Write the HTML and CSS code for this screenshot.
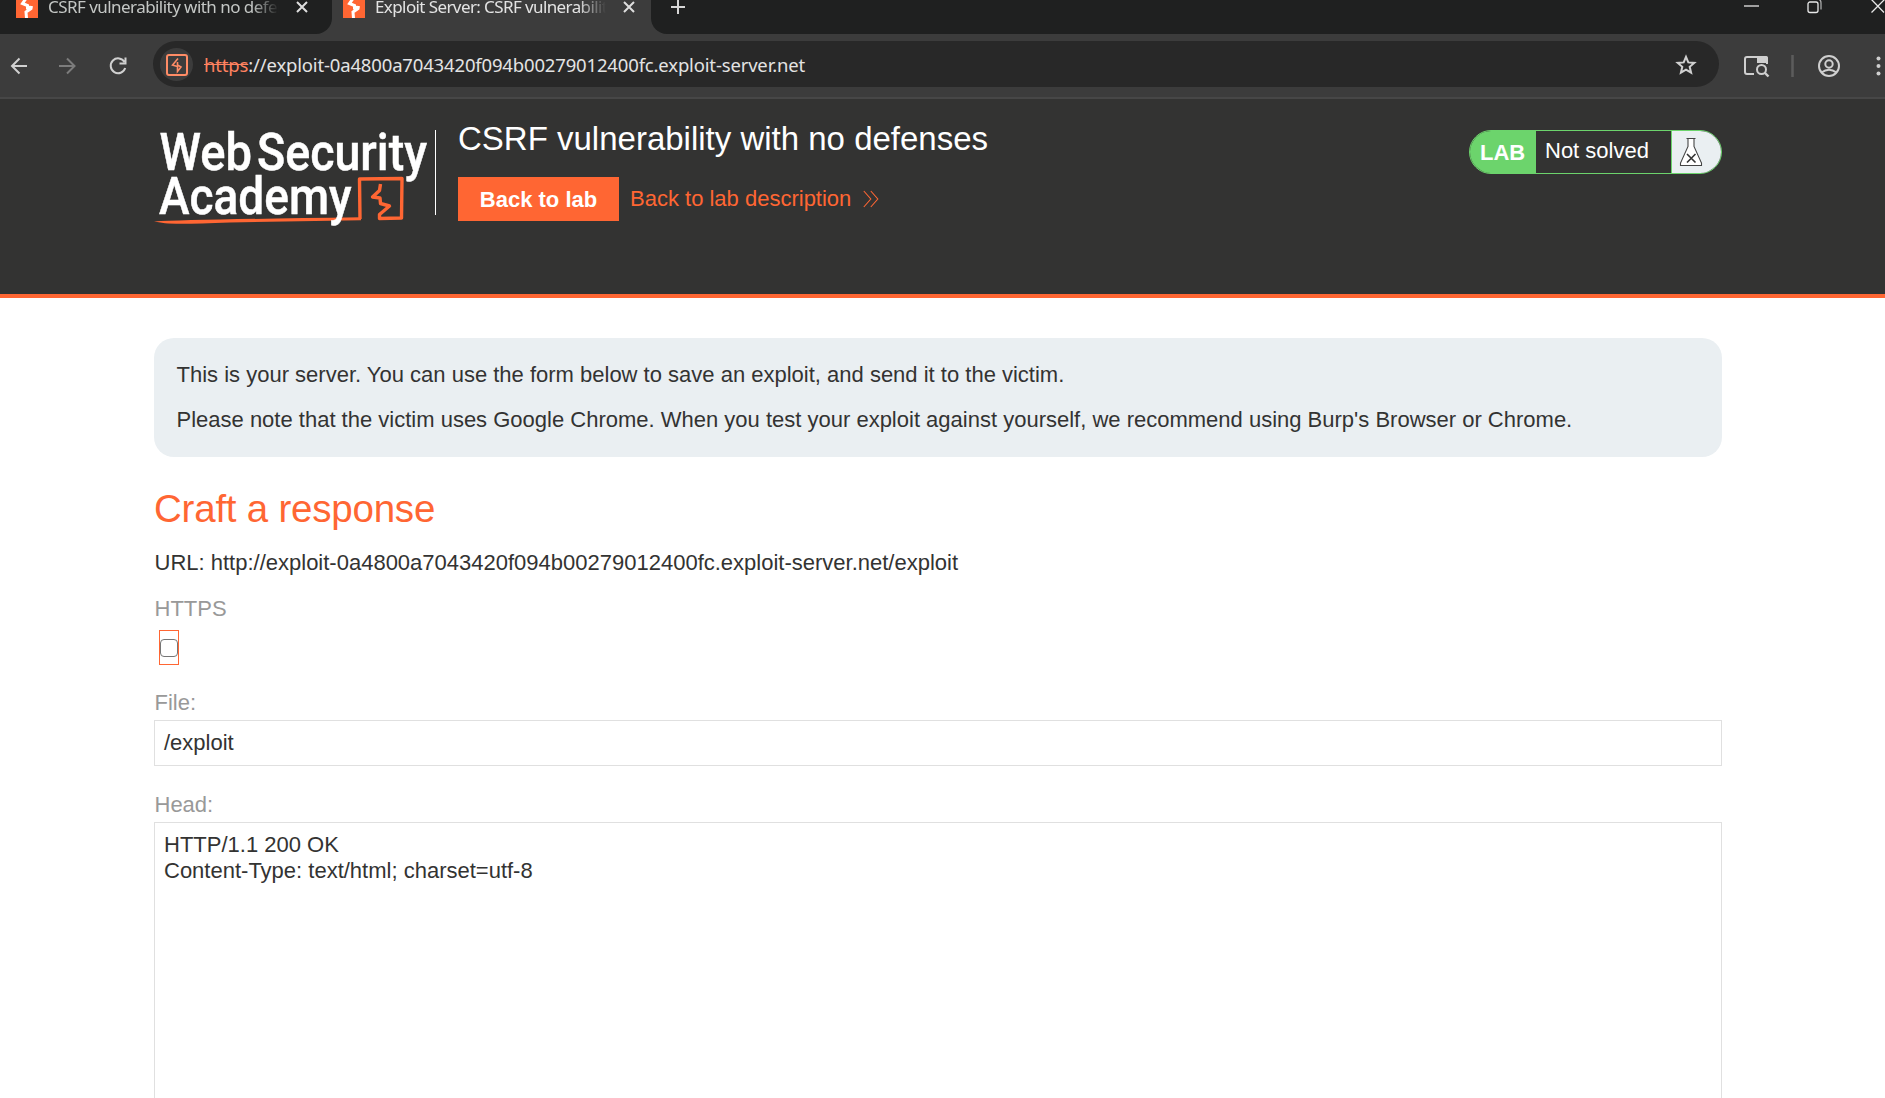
FILE: index.html
```html
<!DOCTYPE html>
<html lang="en">
<head>
<meta charset="utf-8">
<title>Exploit Server: CSRF vulnerability with no defenses</title>
<link rel="stylesheet" href="styles.css">
</head>
<body>
<svg width="0" height="0" class="defs">
  <symbol id="fav" viewBox="0 0 22 22"><path fill="#ff6633" d="M0 0h22v22H0z"/><path fill="none" stroke="#fff" stroke-width="3" d="M11 1L6.500 7.500L11.500 9.500V13M15.500 10L15 12.500L10 16L10.500 22"/><path fill="#fff" d="M10.500 9l5.500 1.500-1 3-4.500 1.500z"/></symbol>
  <symbol id="x" viewBox="0 0 12 12"><path d="M1 1l10 10M11 1L1 11" fill="none" stroke="currentColor" stroke-width="2"/></symbol>
</svg>
<div class="tabs">
  <div class="tab idle">
    <svg class="fav" width="22" height="22"><use href="#fav"/></svg>
    <span class="label">CSRF vulnerability with no defenses</span>
    <svg class="close" width="12" height="12"><use href="#x"/></svg>
  </div>
  <div class="tab active">
    <svg class="fav" width="22" height="22"><use href="#fav"/></svg>
    <span class="label">Exploit Server: CSRF vulnerability with no defenses</span>
    <svg class="close" width="12" height="12"><use href="#x"/></svg>
  </div>
  <div class="rest">
    <svg class="plus" width="14" height="14" viewBox="0 0 14 14"><path d="M7 0v14M0 7h14" stroke="#d6d6d6" stroke-width="2"/></svg>
    <svg class="win" width="141" height="16" viewBox="0 0 141 16" fill="none" stroke="#e8e8e8" stroke-width="1.3">
      <path d="M0 6h15" stroke="#a0a0a0" stroke-width="2"/>
      <rect x="64" y="2" width="10" height="10.500" rx="2"/><path d="M67-1h6q4 0 4 4v6.500" stroke="#aaa"/>
      <path d="M127-1l13 13.500M141-1l-13.500 13.500"/>
    </svg>
  </div>
</div>
<div class="toolbar">
  <svg class="nav" width="126" height="24" viewBox="0 0 126 24" fill="none" stroke-width="2">
    <path d="M17 12H2M9.500 4.500L2 12l7.500 7.500" stroke="#d0d0d0"/>
    <path d="M49 12h15M57 4.500l7.500 7.500-7.500 7.500" stroke="#7c7c7c"/>
    <path d="M114.500 8A7.400 7.400 0 1 0 115.200 14M115.500 3.500V9.500H109.500" stroke="#d0d0d0"/>
  </svg>
  <div class="omni">
    <span class="site"><svg width="22" height="22" viewBox="0 0 22 22" fill="none" stroke="#ff8c66"><rect x="1" y="1" width="20" height="20" rx="2" stroke-width="2"/><path d="M12 4.500L6.500 11L11.500 12.500V17.500L15 13L11.500 11V8" stroke-width="1.600"/></svg></span>
    <span class="url"><s>https</s>://exploit-0a4800a7043420f094b00279012400fc.exploit-server.net</span>
    <svg class="star" width="22" height="22" viewBox="0 0 22 22"><path d="M11 2.800l2.300 5.600 6 .5-4.600 3.900 1.400 5.900L11 15.600l-5.100 3.100 1.400-5.900-4.600-3.900 6-.5z" fill="none" stroke="#d0d0d0" stroke-width="2"/></svg>
  </div>
  <svg class="tools" width="142" height="24" viewBox="0 0 142 24" fill="none" stroke="#cfcfcf" stroke-width="2">
    <path d="M11 20H4q-2 0-2-2V5q0-2 2-2h18q2 0 2 2v5"/><path d="M14 2h9q2 0 2 2v5H14z" fill="#cfcfcf" stroke="none"/>
    <circle cx="18.500" cy="15.500" r="4.500" fill="#3c3c3c"/><path d="M21.500 18.500l4 4" stroke-width="2.400"/>
    <path d="M49.500 1v22" stroke="#5c5c5c" stroke-width="2.500"/>
    <circle cx="86" cy="12" r="10"/><circle cx="86" cy="10" r="3.700"/><path d="M78.500 18.500q7.500-5.500 15 0"/>
    <g fill="#cfcfcf" stroke="none"><circle cx="135.500" cy="4.500" r="2"/><circle cx="135.500" cy="12" r="2"/><circle cx="135.500" cy="19.500" r="2"/></g>
  </svg>
</div>
<header class="head">
  <svg class="logo" width="284" height="100" viewBox="154 126 284 100">
    <path d="M360 219L359.500 179L402 178.500L401.500 218L379.500 218.500L379.500 214.500L389.500 206L380.500 203.500L380 198L372.500 197L379.500 190.500L380.500 184" fill="none" stroke="#ff6633" stroke-linejoin="round" stroke-width="3.400"/>
    <path d="M154 221.500Q190 219.500 361 217.300V220.300L230 222.500Q180 224.500 165 223.300Z" fill="#ff6633"/>
    <g class="logotext">
      <text x="159.500" y="169.500" textLength="92.500" lengthAdjust="spacingAndGlyphs">Web</text>
      <text x="257" y="169.500" textLength="170" lengthAdjust="spacingAndGlyphs">Security</text>
      <text x="159" y="213.500" textLength="192.500" lengthAdjust="spacingAndGlyphs">Academy</text>
    </g>
    <path d="M435.500 130v85" stroke="#fff"/>
  </svg>
  <div class="title">
    <h2>CSRF vulnerability with no defenses</h2>
    <div class="links">
      <a class="btn">Back to lab</a>
      <a class="desc">Back to lab description</a>
      <svg width="16" height="18" viewBox="0 0 16 18" fill="none" stroke="#ff6633" stroke-width="1.100"><path d="M.8 1l7 8-7 8M7.800 1l7 8-7 8"/></svg>
    </div>
  </div>
  <div class="badge">
    <span class="lab">LAB</span><span class="state">Not solved</span>
    <span class="flask"><svg width="24" height="30" viewBox="0 0 24 30"><path d="M7.500 1.500h9M9 1.500v8L1.500 26v2.500h21V26L15 9.500v-8" fill="#fff" stroke="#444" stroke-width="1.100"/><path d="M8 17l8.500 8.500M16.500 17L8 25.500" stroke="#333" stroke-width="1.600"/></svg></span>
  </div>
</header>
<main>
  <section class="info">
    <p>This is your server. You can use the form below to save an exploit, and send it to the victim.</p>
    <p>Please note that the victim uses Google Chrome. When you test your exploit against yourself, we recommend using Burp's Browser or Chrome.</p>
  </section>
  <h1>Craft a response</h1>
  <p class="line">URL: http://exploit-0a4800a7043420f094b00279012400fc.exploit-server.net/exploit</p>
  <label class="line https">HTTPS</label>
  <div class="check"><span></span></div>
  <label class="line">File:</label>
  <div class="input">/exploit</div>
  <label class="line">Head:</label>
  <div class="area">HTTP/1.1 200 OK
Content-Type: text/html; charset=utf-8</div>
</main>
</body>
</html>
```
FILE: styles.css
```css
* { box-sizing: border-box; }
body { margin: 0; height: 1098px; overflow: hidden; background: #fff; color: #333332; font: 22px/26px "Liberation Sans", Arial, sans-serif; }
p, h1, h2 { margin: 0; font-weight: 400; }
svg { display: block; flex: none; }
.defs { position: absolute; }

.tabs { display: flex; height: 34px; background: #3c3c3c; font: 17px/20px "Noto Sans", sans-serif; letter-spacing: -0.55px; color: #c4c7c5; overflow: hidden; }
.tab { display: flex; align-items: flex-start; white-space: nowrap; }
.tab .fav { margin-top: -4px; }
.tab .label { width: 231px; margin: -3px 0 0 10px; overflow: hidden; mask-image: linear-gradient(90deg, #000 88%, transparent 100%); }
.tab .close { margin: 1px 0 0 17px; color: #dedede; }
.idle { width: 332px; height: 34px; padding-left: 16px; background: #1f2020; border-radius: 0 0 16px 0; }
.active { width: 319px; padding-left: 11px; color: #e3e3e3; }
.active .label { letter-spacing: -0.6px; }
.rest { display: flex; flex: 1; background: #1f2020; border-radius: 0 0 0 16px; }
.plus { margin: 0 0 0 20px; }
.win { margin-left: auto; }

.toolbar { display: flex; align-items: center; height: 65px; padding: 0 0 3px 0; background: #3c3c3c; border-bottom: 2px solid #474747; }
.nav { margin: 4px 0 0 10px; }
.omni { display: flex; align-items: center; width: 1566px; height: 46px; margin-left: 17px; padding: 1px 22px 0 7px; border-radius: 23px; background: #282828; font: 18.500px/26px "Noto Sans", sans-serif; color: #e3e3e3; white-space: nowrap; }
.site { display: grid; place-items: center; width: 33px; height: 33px; border-radius: 50%; background: #3c3c3c; }
.url { margin: 1px 0 0 11px; letter-spacing: -0.16px; }
.url s { color: #ff8260; }
.star { margin: 1px 0 0 auto; }
.tools { margin: 4px 0 0 24px; }

.head { display: flex; height: 199px; padding: 0 163px 0 154px; background: #333332; border-bottom: 4px solid #ff6633; }
.logo { margin-top: 27px; }
.logotext { fill: #fff; stroke: #fff; stroke-width: .5px; font-family: Roboto, sans-serif; font-size: 52px; font-weight: 500; }
.title { margin: 21px 0 0 20px; color: #fff; }
h2 { font-size: 33px; line-height: 38px; }
.links { display: flex; align-items: center; margin-top: 19px; color: #ff6633; }
.btn { width: 161px; height: 44px; line-height: 45px; text-align: center; font-weight: 700; color: #fff; background: #ff6633; }
.desc { margin: -1px 12px 0 11px; }
.badge { display: flex; width: 253px; height: 44px; margin: 31px 0 0 auto; border: 1px solid #6cd46c; border-radius: 22px; overflow: hidden; color: #fff; }
.lab { width: 66px; padding: 0 0 0 10px; line-height: 43px; font-weight: 700; background: #6cd46c; }
.state { width: 136px; padding-left: 9px; line-height: 39px; border-right: 1px solid #6cd46c; }
.flask { flex: 1; padding: 6px 0 0 7px; background: #eaeff2; }

main { display: flex; flex-direction: column; margin: 0 163px 0 154px; padding-top: 40px; }
.info { display: flex; flex-direction: column; gap: 19px; height: 119px; padding: 24px 22px 0 22.500px; background: #eaeff2; border-radius: 20px; }
h1 { margin-top: 30px; font-size: 38.500px; line-height: 44px; letter-spacing: -0.22px; color: #ff6633; }
.line { margin-top: 19px; padding-left: .5px; }
label { color: #999; }
label.line { margin-top: 25px; }
label.https { margin-top: 20px; }
.check { width: 20px; height: 35px; margin: 8px 0 0 5px; padding-top: 8px; border: 1px solid #ff6633; }
.check span { display: block; width: 18px; height: 18px; border: 1.500px solid #767676; border-radius: 4px; }
.input { height: 46px; margin-top: 4px; padding: 9px; border: 1px solid #e0e0e0; }
label.line + .area { margin-top: 4px; }
.input + label.line { margin-top: 26px; }
.area { height: 320px; padding: 9px; border: 1px solid #e0e0e0; white-space: pre-wrap; }
```
